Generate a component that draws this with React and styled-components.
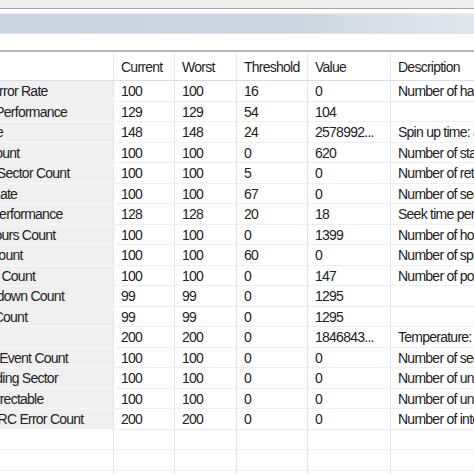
import styled, { createGlobalStyle } from "styled-components";

const GlobalStyle = createGlobalStyle`
    html, body {
        margin: 0;
        padding: 0;
        background: #ffffff;
        overflow: hidden;
    }
    body {
        font-family: "Liberation Sans", Arial, sans-serif;
        font-size: 14px;
        letter-spacing: -0.75px;
        color: #222;
    }
`

const rows = [
    ["Raw Read Error Rate", "100", "100", "16", "0", "Number of hardware read errors"],
    ["Throughput Performance", "129", "129", "54", "104", ""],
    ["Spin Up Time", "148", "148", "24", "2578992...", "Spin up time: average"],
    ["Start/Stop Count", "100", "100", "0", "620", "Number of start/stop cycles"],
    ["Reallocated Sector Count", "100", "100", "5", "0", "Number of retired sectors"],
    ["Seek Error Rate", "100", "100", "67", "0", "Number of seek errors"],
    ["Seek Time Performance", "128", "128", "20", "18", "Seek time performance"],
    ["Power-on Hours Count", "100", "100", "0", "1399", "Number of hours powered on"],
    ["Spin Retry Count", "100", "100", "60", "0", "Number of spin retries"],
    ["Power Cycle Count", "100", "100", "0", "147", "Number of power cycles"],
    ["Unsafe Shutdown Count", "99", "99", "0", "1295", ""],
    ["Load Cycle Count", "99", "99", "0", "1295", ""],
    ["Temperature", "200", "200", "0", "1846843...", "Temperature: current"],
    ["Reallocation Event Count", "100", "100", "0", "0", "Number of sector remaps"],
    ["Current Pending Sector", "100", "100", "0", "0", "Number of unstable sectors"],
    ["Offline Uncorrectable", "100", "100", "0", "0", "Number of uncorrectable errors"],
    ["Ultra DMA CRC Error Count", "200", "200", "0", "0", "Number of interface CRC errors"],
]

const headers = ["", "Current", "Worst", "Threshold", "Value", "Description"]

const App = () => {
    return (
        <Page>
            <GlobalStyle />
            <TitleStrip />
            <Toolbar>
                <Band />
            </Toolbar>
            <Grid>
                <HeaderRow>
                    {headers.map((h, i) => (
                        <HeadCell key={i}>{h}</HeadCell>
                    ))}
                </HeaderRow>
                {rows.map((r, i) => (
                    <Row key={i}>
                        <NameCell filled>{r[0]}</NameCell>
                        {r.slice(1).map((c, j) => (
                            <Cell key={j}>{c}</Cell>
                        ))}
                    </Row>
                ))}
                {[0, 1, 2].map((i) => (
                    <Row key={"e" + i}>
                        <NameCell />
                        <Cell />
                        <Cell />
                        <Cell />
                        <Cell />
                        <Cell />
                    </Row>
                ))}
            </Grid>
        </Page>
    );
}

const Page = styled.div`
    width: 474px;
    height: 474px;
    overflow: hidden;
    background: #fff;
`
const TitleStrip = styled.div`
    height: 8px;
    background: #efefef;
    border-bottom: 1px solid #a4a4a4;
    box-shadow: 0 1px 0 #d4d4d4;
`
const Toolbar = styled.div`
    padding: 4px 0 16px;
    background: #fff;
    border-bottom: 2px solid #b8b8b8;
`
const Band = styled.div`
    height: 19px;
    background: linear-gradient(90deg, #c8d4e0 0%, #ccd7e3 60%, #e0e7ef 100%);
    border-top: 1px solid #e6ecf2;
    border-bottom: 1px solid #dde4ec;
`
const Grid = styled.div`
    margin-left: -76px;
    width: 720px;
`
const columns = "190px 61px 62px 71px 83px 250px"

const HeaderRow = styled.div`
    display: grid;
    grid-template-columns: ${columns};
    height: 28px;
    border-bottom: 1px solid #d8dee5;
    background: #fff;
`
const HeadCell = styled.div`
    display: flex;
    align-items: center;
    padding-left: 7px;
    padding-top: 2px;
    border-right: 1px solid #e4e9ee;
    white-space: nowrap;
    overflow: hidden;
    color: #1f1f1f;
`
const Row = styled.div`
    display: grid;
    grid-template-columns: ${columns};
    height: 20.5px;
    box-sizing: border-box;
`
const Cell = styled.div`
    display: flex;
    align-items: center;
    padding-left: 7px;
    padding-top: 1px;
    border-right: 1px solid #dfe7ef;
    border-bottom: 1px solid #edf1f5;
    white-space: nowrap;
    overflow: hidden;
`
const NameCell = styled(Cell)`
    padding-left: 4px;
    background: ${(p) => (p.filled ? "#f0f0f0" : "#fff")};
    border-bottom-color: ${(p) => (p.filled ? "#f7f7f7" : "#edf1f5")};
`

export default App;
